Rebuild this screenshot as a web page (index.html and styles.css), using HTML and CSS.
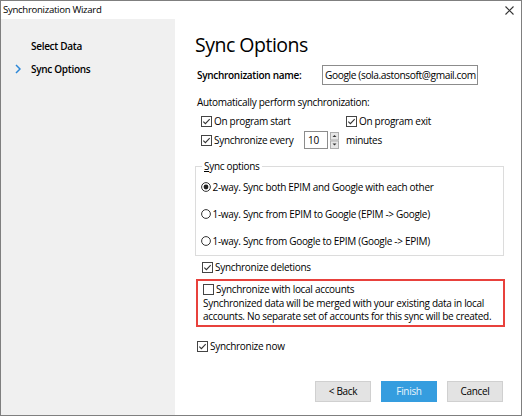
FILE: index.html
```html
<!DOCTYPE html>
<html>
<head>
<meta charset="utf-8">
<link rel="stylesheet" href="styles.css">
</head>
<body>
<div class="window">
  <div class="titlebar">
    <span class="title">Synchronization Wizard</span>
    <svg class="close" width="9" height="9" viewBox="0 0 9 9"><path d="M0.5 0.5 L8.5 8.5 M8.5 0.5 L0.5 8.5" stroke="#333" stroke-width="1.1" fill="none"/></svg>
  </div>
  <div class="main">
    <div class="sidebar">
      <div class="step">Select Data</div>
      <div class="step current">
        <svg class="chev" width="6" height="10" viewBox="0 0 6 10"><path d="M1 1 L5 5 L1 9" stroke="#2b87d8" stroke-width="1.5" fill="none"/></svg>
        Sync Options
      </div>
    </div>
    <div class="content">
      <h1 class="heading">Sync Options</h1>
      <div class="name-row">
        <span class="name-label">Synchronization name:</span>
        <div class="input">Google (sola.astonsoft@gmail.com</div>
      </div>
      <div class="auto-label">Automatically perform synchronization:</div>
      <div class="row row1">
        <label class="check col1"><svg class="box" width="11" height="11" viewBox="0 0 11 11"><rect x="0.5" y="0.5" width="10" height="10" fill="#fff" stroke="#444"/><path d="M2.3 5.6 L4.4 7.7 L8.7 3.2" stroke="#333" stroke-width="1.1" fill="none"/></svg>On program start</label>
        <label class="check"><svg class="box" width="11" height="11" viewBox="0 0 11 11"><rect x="0.5" y="0.5" width="10" height="10" fill="#fff" stroke="#444"/><path d="M2.3 5.6 L4.4 7.7 L8.7 3.2" stroke="#333" stroke-width="1.1" fill="none"/></svg>On program exit</label>
      </div>
      <div class="row row2">
        <label class="check every"><svg class="box" width="11" height="11" viewBox="0 0 11 11"><rect x="0.5" y="0.5" width="10" height="10" fill="#fff" stroke="#444"/><path d="M2.3 5.6 L4.4 7.7 L8.7 3.2" stroke="#333" stroke-width="1.1" fill="none"/></svg>Synchronize every</label>
        <div class="spin">
          <div class="spin-input">10</div>
          <div class="spin-btns">
            <svg width="9" height="17" viewBox="0 0 9 17"><rect x="0.5" y="0.5" width="8" height="7.5" fill="#e6e6e6" stroke="#adadad"/><rect x="0.5" y="9" width="8" height="7.5" fill="#e6e6e6" stroke="#adadad"/><path d="M2.5 5 L4.5 3 L6.5 5 Z" fill="#333"/><path d="M2.5 11.5 L4.5 13.5 L6.5 11.5 Z" fill="#333"/></svg>
          </div>
        </div>
        <span class="minutes">minutes</span>
      </div>
      <fieldset class="group">
        <legend class="legend"><u>S</u>ync options</legend>
        <div class="radio"><svg class="rad" width="10" height="10" viewBox="0 0 10 10"><circle cx="5" cy="5" r="4.4" fill="#fff" stroke="#333"/><circle cx="5" cy="5" r="2.4" fill="#222"/></svg>2-way. Sync both EPIM and Google with each other</div>
        <div class="radio"><svg class="rad" width="10" height="10" viewBox="0 0 10 10"><circle cx="5" cy="5" r="4.4" fill="#fff" stroke="#333"/></svg>1-way. Sync from EPIM to Google (EPIM -&gt; Google)</div>
        <div class="radio"><svg class="rad" width="10" height="10" viewBox="0 0 10 10"><circle cx="5" cy="5" r="4.4" fill="#fff" stroke="#333"/></svg>1-way. Sync from Google to EPIM (Google -&gt; EPIM)</div>
      </fieldset>
      <label class="check deletions"><svg class="box" width="11" height="11" viewBox="0 0 11 11"><rect x="0.5" y="0.5" width="10" height="10" fill="#fff" stroke="#444"/><path d="M2.3 5.6 L4.4 7.7 L8.7 3.2" stroke="#333" stroke-width="1.1" fill="none"/></svg>Synchronize deletions</label>
      <div class="highlight">
        <label class="check local"><svg class="box" width="11" height="11" viewBox="0 0 11 11"><rect x="0.5" y="0.5" width="10" height="10" fill="#fff" stroke="#444"/></svg>Synchronize with local accounts</label>
        <div class="note">Synchronized data will be merged with your existing data in local accounts. No separate set of accounts for this sync will be created.</div>
      </div>
      <label class="check now"><svg class="box" width="11" height="11" viewBox="0 0 11 11"><rect x="0.5" y="0.5" width="10" height="10" fill="#fff" stroke="#444"/><path d="M2.3 5.6 L4.4 7.7 L8.7 3.2" stroke="#333" stroke-width="1.1" fill="none"/></svg>Synchronize now</label>
      <div class="buttons">
        <div class="btn">&lt; Back</div>
        <div class="btn primary">Finish</div>
        <div class="btn">Cancel</div>
      </div>
    </div>
  </div>
</div>
</body>
</html>
```
FILE: styles.css
```css
* { box-sizing: border-box; }
html, body { margin: 0; padding: 0; }
body {
  width: 522px;
  height: 416px;
  background: #fff;
  font-family: "Open Sans", "Noto Sans", sans-serif;
  font-size: 10px;
  letter-spacing: -0.3px;
  color: #000;
}
.window {
  width: 522px;
  height: 416px;
  border: 1px solid #7f7f7f;
  display: flex;
  flex-direction: column;
  overflow: hidden;
}
.titlebar {
  height: 18px;
  flex: none;
  display: flex;
  align-items: center;
  justify-content: space-between;
  padding: 0 7px 0 2px;
  background: #fff;
}
.title { font-size: 9.6px; line-height: 18px; }
.close { display: block; }
.main { flex: 1; display: flex; min-height: 0; }
.sidebar {
  width: 174px;
  flex: none;
  background: #f0f0f0;
  padding-top: 19px;
}
.step {
  font-weight: 600;
  height: 23px;
  line-height: 16px;
  padding-left: 30px;
  position: relative;
}
.chev { position: absolute; left: 14px; top: 3px; }
.content {
  flex: 1;
  display: flex;
  flex-direction: column;
  padding: 0 17px 13px 20px;
}
.heading {
  margin: 13px 0 0 0;
  height: 26px;
  line-height: 26px;
  font-size: 19.5px;
  letter-spacing: -0.5px;
  font-weight: 400;
}
.name-row {
  margin-top: 7px;
  height: 20px;
  display: flex;
  align-items: center;
  padding-left: 2px;
}
.name-label { font-weight: 600; width: 125px; flex: none; }
.input {
  width: 156px;
  height: 20px;
  border: 1px solid #8c8c8c;
  line-height: 18px;
  padding-left: 2px;
  white-space: nowrap;
  overflow: hidden;
  font-size: 10.2px;
  letter-spacing: -0.4px;
}
.auto-label { margin-top: 10px; height: 14px; line-height: 14px; padding-left: 2px; }
.row { height: 18px; display: flex; align-items: center; padding-left: 6px; }
.row1 { margin-top: 3px; }
.row2 { margin-top: 1px; }
.check { display: flex; align-items: center; height: 18px; line-height: 14px; }
.box { display: block; flex: none; margin-right: 2px; }
.col1 { width: 145px; }
.every { width: 103px; }
.spin { display: flex; align-items: center; }
.spin-input {
  width: 24px;
  height: 18px;
  border: 1px solid #8c8c8c;
  line-height: 16px;
  padding-left: 3px;
}
.spin-btns { margin-left: 2px; display: flex; }
.spin-btns svg { display: block; }
.minutes { margin-left: 7px; }
.group {
  margin: 10px 0 0 0;
  padding: 0 0 1px 5px;
  border: 1px solid #dcdcdc;
  min-width: 0;
}
.legend { padding: 0 2px; margin-left: 1px; line-height: 14px; height: 14px; }
.legend u { text-decoration-thickness: 1px; }
.radio { height: 27px; display: flex; align-items: center; }
.rad { display: block; margin-right: 1.5px; flex: none; }
.deletions { margin-top: 2px; padding-left: 7px; }
.highlight {
  margin-top: 3px;
  margin-right: -1px;
  margin-left: 1px;
  border: 2px solid #e8413c;
  padding: 0 4px 2px 5px;
  height: 48px;
}
.local { height: 16px; }
.note { line-height: 13px; }
.now { margin-top: 10px; padding-left: 2px; }
.buttons {
  margin-top: auto;
  display: flex;
  justify-content: flex-end;
  gap: 10px;
  padding-right: 1px;
}
.btn {
  width: 56px;
  height: 21px;
  line-height: 19px;
  text-align: center;
  background: #e3e3e3;
  border: 1px solid #d0d0d0;
  font-size: 10px;
}
.btn.primary { background: #359ddf; border-color: #359ddf; color: #e8f4fc; }
```
